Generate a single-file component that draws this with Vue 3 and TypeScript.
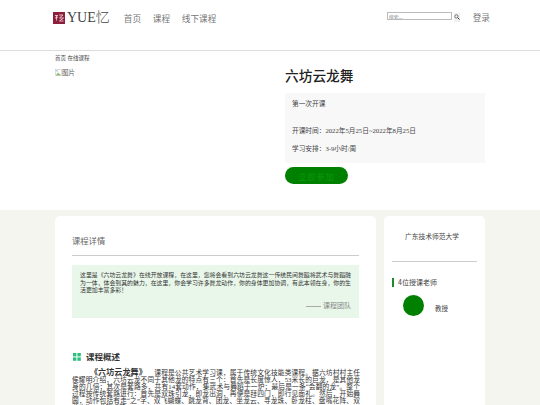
<script setup lang="ts">
const nav: string[] = ['首页', '课程', '线下课程']
</script>

<template>
  <div class="page">
    <header class="header">
      <div class="header-inner">
        <div class="logo">
          <span class="logo-mark">
            <svg viewBox="0 0 12 12" width="12" height="12">
              <rect width="12" height="12" fill="#8e1f3c" />
              <path d="M2 3.5H5M3.5 3.5V8.5M2 6L5 5M6 3H10L6.5 6H10.5L6.5 9H10.5" stroke="#f3dfe2" stroke-width=".8" fill="none" />
            </svg>
          </span>
          <span class="logo-text">YUE忆</span>
        </div>
        <nav class="nav">
          <span v-for="item in nav" :key="item">{{ item }}</span>
        </nav>
        <div class="tools">
          <input class="search" placeholder="搜索..." />
          <span class="search-btn">
            <svg viewBox="0 0 8 8" width="6" height="6">
              <circle cx="3.2" cy="3.2" r="2.2" fill="none" stroke="#555" stroke-width="1" />
              <path d="M5 5L7.4 7.4" stroke="#333" stroke-width="1.3" />
            </svg>
          </span>
          <span class="login">登录</span>
        </div>
      </div>
    </header>

    <div class="crumb">首页 在线课程</div>

    <section class="hero">
      <div class="cover">
        <svg viewBox="0 0 6 6" width="7" height="7">
          <rect x=".3" y=".3" width="5.4" height="5.4" fill="#fff" stroke="#bbb" stroke-width=".4" />
          <path d="M.5 5.5L2.6 3L5.5 5.5Z" fill="#8fbf7a" />
          <rect x="1" y="1" width="1.6" height="1.2" fill="#a9c8f0" />
        </svg>
        <span>图片</span>
      </div>
      <div class="info">
        <h1 class="title">六坊云龙舞</h1>
        <div class="info-box">
          <p class="first">第一次开课</p>
          <p>开课时间：2022年5月25日~2022年8月25日</p>
          <p>学习安排：3-9小时/周</p>
        </div>
        <button class="join">立即参加</button>
      </div>
    </section>

    <section class="lower">
      <div class="lower-inner">
        <main class="detail">
          <h2 class="detail-title">课程详情</h2>
          <div class="quote">
            <p>这里是《六坊云龙舞》在线开放课程，在这里，您将会看到六坊云龙舞这一传统民间舞蹈将武术与舞蹈融为一体，体会到其的魅力，在这里，你会学习许多舞龙动作，你的身体更加协调，有此本领在身，你的生活更加丰富多彩！</p>
            <div class="sign"><i></i>课程团队</div>
          </div>
          <h3 class="overview">
            <svg viewBox="0 0 8 8" width="8" height="8">
              <rect width="3.4" height="3.4" fill="#2cc07f" />
              <rect x="4.4" width="3.4" height="3.4" fill="#2cc07f" />
              <rect y="4.4" width="3.4" height="3.4" fill="#2cc07f" />
              <rect x="4.4" y="4.4" width="3.4" height="3.4" fill="#2cc07f" />
            </svg>
            课程概述
          </h3>
          <p class="body"><b>《六坊云龙舞》</b>课程是公共艺术学习课，属于传统文化技能类课程。据六坊村村主任侯耀明介绍，六坊云龙不同于其他龙的特点有三个：首先是长度惊人，53米长的巨龙，是其他龙身的几倍；其次是套路多，共有14套动作，集武术与舞蹈于一炉；最后是一条“会翻的龙”。整个过程按传统套路进行：首先是双珠引龙，即龙出洞，再便是拜四门，即行见面礼。然后，开始舞圆，动作包括有走“之”字、双飞蝴蝶、跳龙背、团龙、坐龙云、寻龙珠、卧龙柱、盘嘴花阵、双龙出海、龙腾虎跃。</p>
        </main>
        <aside class="side">
          <div class="school">广东技术师范大学</div>
          <div class="teachers-head">4位授课老师</div>
          <div class="teacher">
            <span class="avatar"></span>
            <span>教授</span>
          </div>
        </aside>
      </div>
    </section>
  </div>
</template>

<style>
html, body { margin: 0; padding: 0; background: #fff; overflow: hidden; }
</style>

<style scoped>
.page {
  width: 540px;
  height: 405px;
  overflow: hidden;
  font-family: "Liberation Serif", "Noto Sans CJK SC", serif;
  color: #333;
  display: flex;
  flex-direction: column;
}
.header { height: 50px; border-bottom: 1px solid #ddd; flex: none; }
.header-inner { display: flex; align-items: center; padding: 11px 50px 0 53px; height: 13px; }
.logo { display: flex; align-items: center; gap: 2px; }
.logo-mark { display: flex; }
.logo-text { font-size: 14px; color: #444; line-height: 13px; font-weight: 300; }
.nav { display: flex; gap: 11.6px; margin-left: 14px; margin-top: 2px; font-size: 8.7px; color: #777; font-family: "Noto Sans CJK SC", sans-serif; }
.tools { margin-left: auto; display: flex; align-items: center; }
.search {
  width: 61px; height: 6px; padding: 0 1px; font-size: 5px; border: 1px solid #bbb; border-radius: 0; outline: none;
  font-family: "Noto Sans CJK SC", sans-serif; margin-top: -3px;
}
.search::placeholder { color: #888; }
.search-btn { margin-left: 2px; width: 6px; height: 9px; background: #f0f0f0; display: flex; align-items: center; justify-content: center; margin-top: -1px; }
.login { margin-left: 13px; font-size: 8.7px; color: #777; font-family: "Noto Sans CJK SC", sans-serif; }
.crumb { font-size: 5.5px; line-height: 8px; padding: 3px 0 0 55px; color: #444; flex: none; }
.hero { display: flex; padding: 6px 55px 0; height: 142px; flex: none; }
.cover { width: 230px; display: flex; align-items: flex-start; gap: 0; font-size: 6.5px; color: #555; line-height: 9px; }
.cover svg { margin-top: 1px; }
.title { margin: 0; font-size: 13.7px; font-weight: 500; color: #222; line-height: 18px; height: 25px; }
.info { width: 200px; }
.info-box { background: #f8f8f8; height: 70px; padding: 7px 7px; box-sizing: border-box; font-size: 6.7px; color: #444; }
.info-box p { margin: 0 0 10px; line-height: 8px; }
.info-box .first { margin-bottom: 19px; }
.join {
  display: block; margin-top: 4px; width: 63px; height: 17px; border: 0; border-radius: 9px; background: #008000;
  color: #0c9a0c; font-size: 8.5px; font-family: "Noto Sans CJK SC", sans-serif; padding: 0; letter-spacing: .6px;
}
.lower { background: #f5f5ef; flex: 1; padding: 6px 55px 0; }
.lower-inner { display: flex; gap: 8px; align-items: flex-start; }
.detail { width: 321px; height: 300px; background: #fff; border-radius: 5px; padding: 0 17px; box-sizing: border-box; }
.detail-title { margin: 0; padding: 19px 0 7px; font-size: 8.3px; line-height: 13px; font-weight: 400; color: #666; border-bottom: 1px solid #ccc; }
.quote { margin-top: 9px; background: #e9f7ea; height: 53px; padding: 7px 8px 0; box-sizing: border-box; font-size: 5.9px; line-height: 7.5px; color: #333; }
.quote p { margin: 0; }
.sign { display: flex; align-items: center; justify-content: flex-end; gap: 2px; margin-top: 7px; margin-right: 0; font-size: 7px; color: #888; line-height: 9px; }
.sign i { display: block; width: 15px; height: 1px; background: #aaa; }
.overview { margin: 33px 0 0 1px; display: flex; align-items: center; gap: 5px; font-size: 8.5px; line-height: 12px; color: #333; font-weight: 700; }
.body { margin: 6px -1px 0 0; font-size: 6.75px; line-height: 7px; color: #333; text-indent: 18px; text-align: justify; }
.body b { font-size: 8px; line-height: 0; font-weight: 700; margin-right: 7.5px; }
.side { width: 101px; height: 300px; background: #fff; border-radius: 5px; padding: 0 8px; box-sizing: border-box; font-family: "Noto Sans CJK SC", sans-serif; }
.school { height: 46px; line-height: 8px; padding: 16px 5px 0 0; box-sizing: border-box; text-align: center; font-size: 6.75px; color: #444; border-bottom: 1px solid #ccc; }
.teachers-head { margin-top: 16px; border-left: 2px solid #1e8a2e; padding-left: 4px; font-size: 7px; line-height: 9px; color: #444; }
.teacher { display: flex; align-items: center; margin-top: 8px; padding-left: 11px; gap: 11px; font-size: 6.5px; color: #444; }
.teacher span:last-child { margin-top: 5px; }
.avatar { width: 21px; height: 21px; border-radius: 50%; background: #008000; display: block; }
</style>
